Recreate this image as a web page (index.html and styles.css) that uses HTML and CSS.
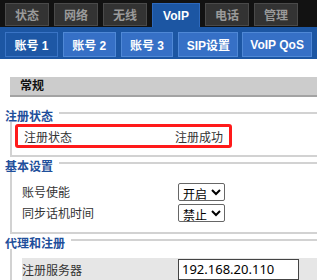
FILE: index.html
```html
<!DOCTYPE html>
<html lang="zh-CN">
<head>
    <meta charset="UTF-8">
    <meta name="viewport" content="width=device-width, initial-scale=1.0">
    <title>VoIP</title>
    <link rel="stylesheet" href="styles.css">
</head>
<body>
    <div class="topnav">
        <a class="tab">状态</a>
        <a class="tab">网络</a>
        <a class="tab">无线</a>
        <a class="tab active">VoIP</a>
        <a class="tab">电话</a>
        <a class="tab">管理</a>
    </div>
    <div class="subnav">
        <a class="subtab active">账号 1</a>
        <a class="subtab">账号 2</a>
        <a class="subtab">账号 3</a>
        <a class="subtab">SIP设置</a>
        <a class="subtab">VoIP QoS</a>
    </div>
    <div class="content">
        <div class="pagehead">常规</div>

        <div class="group first">
            <div class="group-title"><span>注册状态</span></div>
            <div class="group-body">
                <div class="status-box">
                    <span>注册状态</span>
                    <span>注册成功</span>
                </div>
            </div>
        </div>

        <div class="group">
            <div class="group-title"><span>基本设置</span></div>
            <div class="group-body">
                <div class="row">
                    <span class="label">账号使能</span>
                    <select class="sel">
                        <option>开启</option>
                        <option>关闭</option>
                    </select>
                </div>
                <div class="row">
                    <span class="label">同步话机时间</span>
                    <select class="sel">
                        <option>禁止</option>
                        <option>开启</option>
                    </select>
                </div>
            </div>
        </div>

        <div class="group">
            <div class="group-title"><span>代理和注册</span></div>
            <div class="group-body">
                <div class="row shaded">
                    <span class="label">注册服务器</span>
                    <input type="text" class="txt" value="192.168.20.110">
                </div>
            </div>
        </div>
    </div>
</body>
</html>
```

FILE: styles.css
```css
*{
    margin: 0;
    padding: 0;
    box-sizing: border-box;
}
body{
    font-family: "Liberation Sans", "Noto Sans CJK SC", sans-serif;
    font-size: 12px;
    background: #fff;
    overflow: hidden;
}
.topnav{
    background: #121212;
    height: 27px;
    padding: 3px 0 0 5px;
    display: flex;
    align-items: flex-end;
    gap: 5px;
}
.tab{
    width: 44px;
    height: 23px;
    margin-bottom: 1px;
    background: #333;
    border: 1px solid #4a4a4a;
    color: #9a9a9a;
    font-weight: bold;
    font-size: 12px;
    display: flex;
    align-items: center;
    justify-content: center;
}
.tab.active{
    width: 48px;
    height: 24px;
    margin-bottom: 0;
    background: #1c56a3;
    border-color: #2d69bd;
    border-bottom: none;
    color: #fff;
}
.subnav{
    background: #1c56a3;
    height: 32px;
    padding: 5px 5px 0;
    display: flex;
    gap: 5px;
}
.subtab{
    height: 25px;
    background: #3670c6;
    border: 1px solid #4f88d6;
    color: #fff;
    font-weight: bold;
    display: flex;
    align-items: center;
    justify-content: center;
    width: 53px;
}
.subtab:nth-child(4){
    width: 60px;
}
.subtab:nth-child(5){
    width: 70px;
    margin-left: -1px;
}
.subtab.active{
    background: #1d57a5;
    border-color: #3a74c5;
}
.content{
    padding-top: 18px;
}
.pagehead{
    margin-left: 10px;
    height: 20px;
    background: #cccccc;
    border-bottom: 2px solid #a3a3a3;
    padding-left: 10px;
    font-weight: bold;
    color: #111;
    line-height: 18px;
}
.group{
    margin-top: 1px;
}
.group.first{
    margin-top: 11px;
}
.group-title{
    display: flex;
    align-items: center;
    gap: 6px;
    padding-left: 5px;
    height: 14px;
}
.group-title span{
    color: #1f4f9b;
    font-weight: bold;
    font-size: 12px;
}
.group-title::after{
    content: "";
    flex: 1;
    height: 2px;
    background: #d2d2d2;
    margin-top: -4px;
}
.group-body{
    margin-left: 10px;
    border-left: 2px solid #d2d2d2;
    border-bottom: 2px solid #d2d2d2;
    padding: 9px 0 9px 10px;
}
.group.first .group-body{
    padding: 2px 0 7px 3px;
}
.status-box{
    width: 217px;
    height: 24px;
    border: 3px solid #ff1a1a;
    border-radius: 3px;
    display: flex;
    align-items: center;
    justify-content: space-between;
    padding: 0 6px;
    color: #333;
}
.row{
    display: flex;
    align-items: center;
    height: 21px;
    color: #333;
}
.label{
    width: 156px;
}
.sel{
    font-family: "Noto Sans CJK SC", sans-serif;
    font-size: 12px;
    height: 18px;
    width: 47px;
    padding: 0;
    border: 1px solid #666;
    border-radius: 2px;
    background: #fff;
    color: #000;
}
.row.shaded{
    background: #e6e6e6;
    height: 22px;
}
.txt{
    width: 121px;
    height: 21px;
    border: 1px solid #444;
    padding-left: 3px;
    font-family: "Noto Sans", sans-serif;
    font-size: 13px;
    color: #000;
}
```
